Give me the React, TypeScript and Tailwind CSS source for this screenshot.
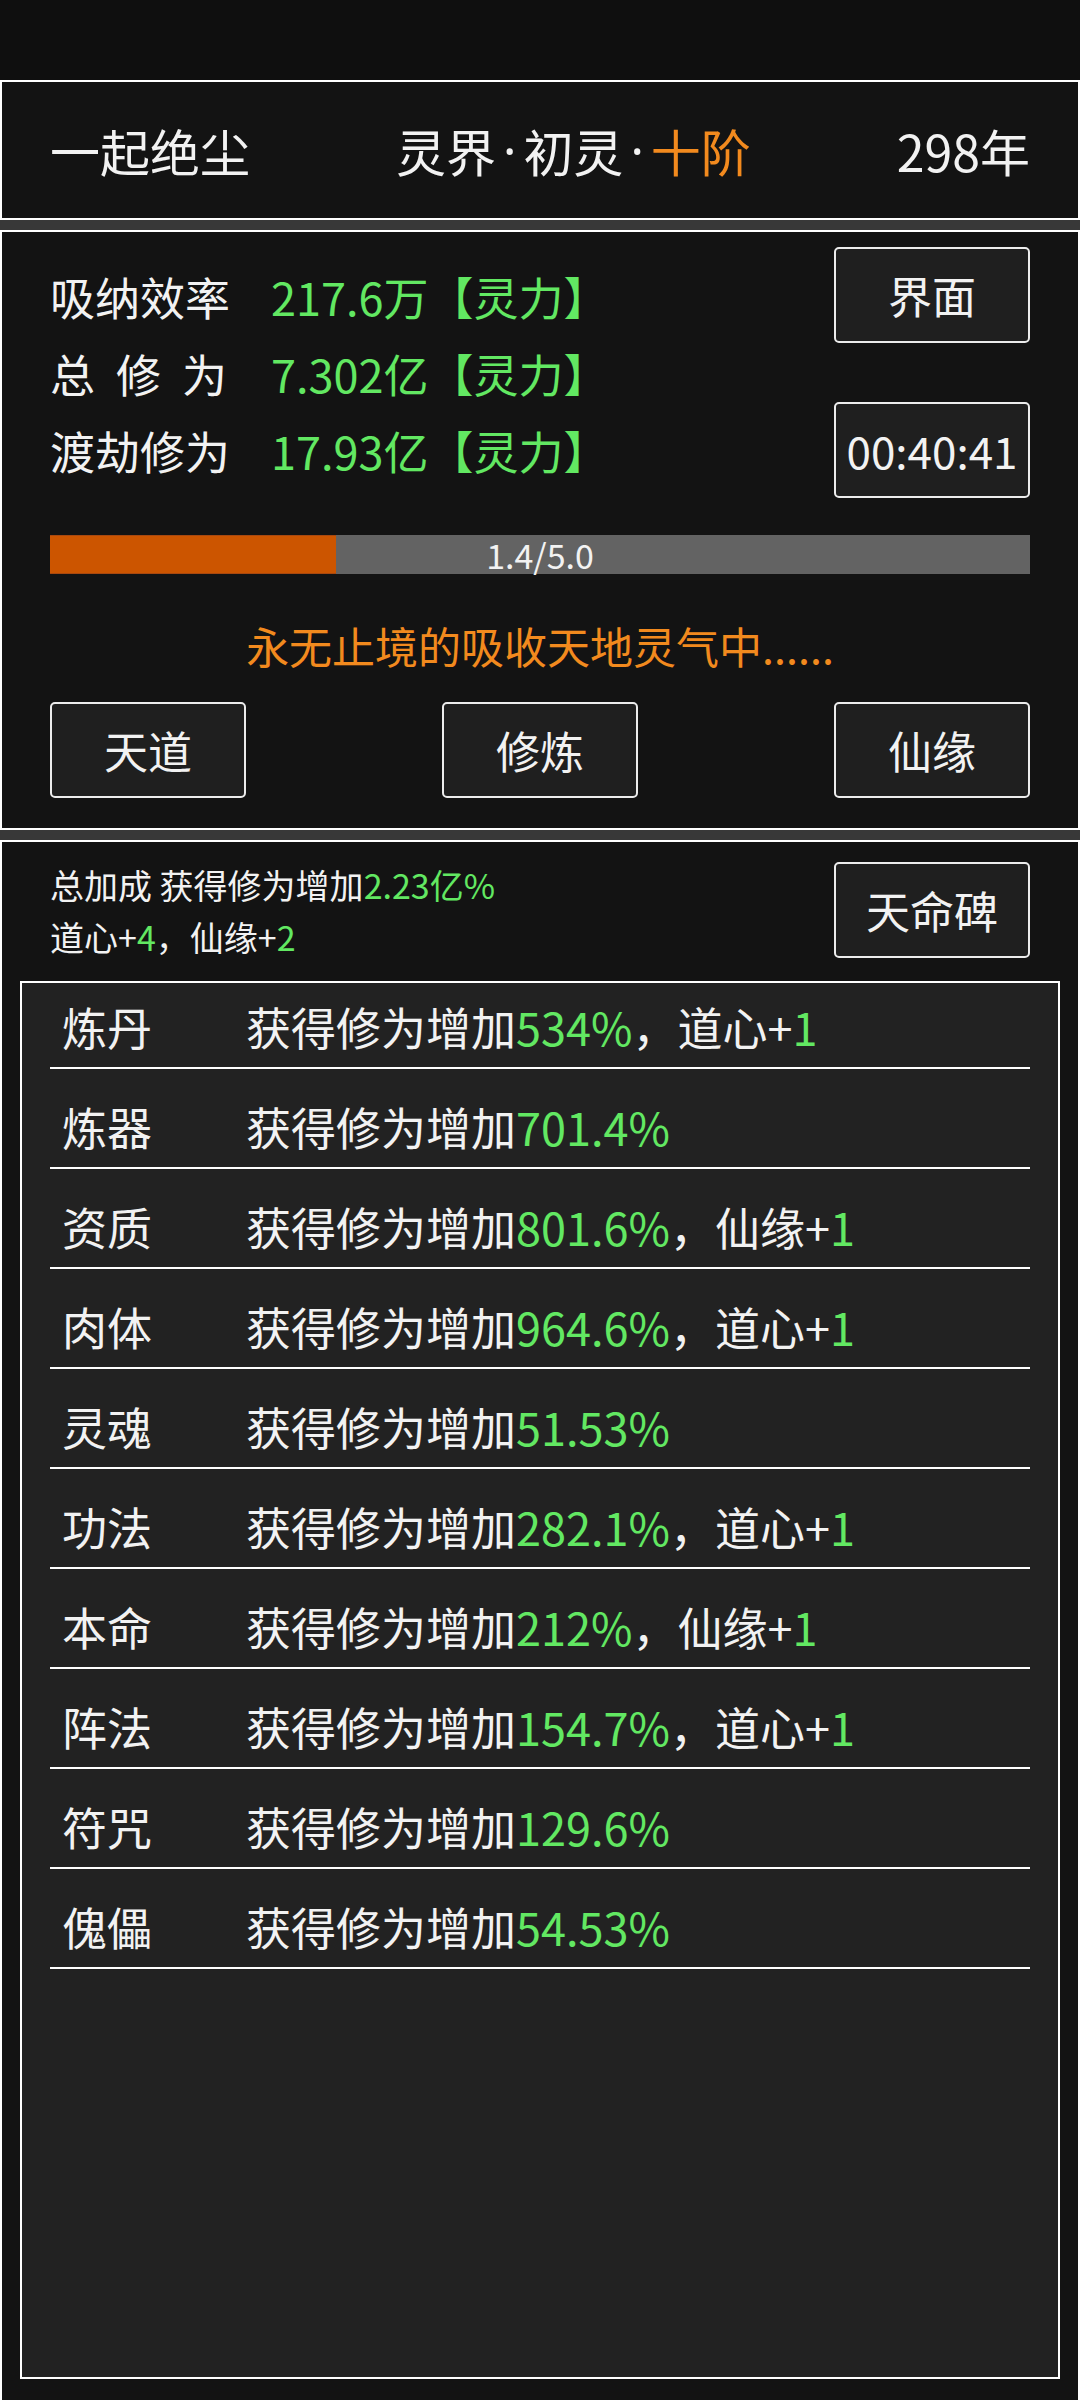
import React from 'react';

const green = 'text-[#62e862]';

const rows = [
  { name: '炼丹', pct: '534%', extra: '道心', n: '1' },
  { name: '炼器', pct: '701.4%' },
  { name: '资质', pct: '801.6%', extra: '仙缘', n: '1' },
  { name: '肉体', pct: '964.6%', extra: '道心', n: '1' },
  { name: '灵魂', pct: '51.53%' },
  { name: '功法', pct: '282.1%', extra: '道心', n: '1' },
  { name: '本命', pct: '212%', extra: '仙缘', n: '1' },
  { name: '阵法', pct: '154.7%', extra: '道心', n: '1' },
  { name: '符咒', pct: '129.6%' },
  { name: '傀儡', pct: '54.53%' },
];

const Btn: React.FC<{ children: React.ReactNode }> = ({ children }) => (
  <button className="w-[196px] h-[96px] border-2 border-[#ececec] rounded-[5px] bg-[#1f1f1f] text-[44px] text-[#f2f2f2] flex items-center justify-center leading-none">
    {children}
  </button>
);

const Spaced: React.FC<{ text: string }> = ({ text }) => (
  <span className="w-[177px] flex justify-between">
    {text.split('').map((c, i) => (
      <span key={i}>{c}</span>
    ))}
  </span>
);

// narrow latin middle dot, the CJK one is full width
const Dot = () => <span className="mx-[7px]" style={{ fontFamily: '"Noto Sans", sans-serif' }}>·</span>;

export default function App() {
  return (
    <div
      className="w-[1080px] min-h-[2400px] bg-[#131313] text-[#f2f2f2] overflow-hidden"
      style={{ fontFamily: '"Noto Sans CJK SC", "Noto Sans", sans-serif' }}
    >
      {/* status bar */}
      <div className="h-[80px] bg-[#0f0f0f]" />

      {/* header */}
      <div className="h-[140px] border-2 border-white bg-[#131313] flex items-center justify-between px-[48px] text-[50px] leading-none">
        <span>一起绝尘</span>
        <span className="flex items-center">
          灵界<Dot />初灵<Dot />
          <span className="text-[#f28a1e]">十阶</span>
        </span>
        <span>298年</span>
      </div>

      <div className="h-[10px] bg-[#383838]" />

      {/* cultivation panel */}
      <div className="h-[600px] border-2 border-white bg-[#131313] px-[48px]">
        <div className="flex justify-between">
          <div className="pt-[26px] text-[45px]">
            <div className="h-[77px] flex items-center">
              <Spaced text="吸纳效率" />
              <span className={`ml-[44px] ${green}`}>217.6万【灵力】</span>
            </div>
            <div className="h-[77px] flex items-center">
              <Spaced text="总修为" />
              <span className={`ml-[44px] ${green}`}>7.302亿【灵力】</span>
            </div>
            <div className="h-[77px] flex items-center">
              <Spaced text="渡劫修为" />
              <span className={`ml-[44px] ${green}`}>17.93亿【灵力】</span>
            </div>
          </div>
          <div className="pt-[15px] flex flex-col gap-[59px]">
            <Btn>界面</Btn>
            <Btn>00:40:41</Btn>
          </div>
        </div>

        <div className="mt-[37px] h-[39px] relative bg-[#636363] flex">
          <div className="w-[29.2%] h-full bg-[#cc5500] border-y border-[#a8480f]" />
          <span className="absolute inset-0 flex items-center justify-center text-[34px] leading-none text-[#f2f2f2]">
            1.4/5.0
          </span>
        </div>

        <div className="mt-[41px] leading-[60px] text-center text-[43px] text-[#f28a1e]">
          永无止境的吸收天地灵气中......
        </div>

        <div className="mt-[27px] flex justify-between">
          <Btn>天道</Btn>
          <Btn>修炼</Btn>
          <Btn>仙缘</Btn>
        </div>
      </div>

      <div className="h-[10px] bg-[#383838]" />

      {/* bonus panel */}
      <div className="h-[1570px] border-2 border-white bg-[#131313]">
        <div className="h-[116px] flex items-start justify-between px-[48px]">
          <div className="pt-[17px] text-[34px] leading-[52px]">
            <div>
              总加成 获得修为增加<span className={green}>2.23亿%</span>
            </div>
            <div>
              道心+<span className={green}>4</span>，仙缘+<span className={green}>2</span>
            </div>
          </div>
          <div className="pt-[20px]">
            <Btn>天命碑</Btn>
          </div>
        </div>

        <div className="mt-[23px] mx-[18px] h-[1398px] border-2 border-white bg-[#222222] px-[28px]">
          {rows.map((r, i) => (
            <div
              key={r.name}
              className={`${i === 0 ? 'h-[86px]' : 'h-[100px]'} flex items-end pb-[10px] border-b-2 border-white text-[45px] leading-[60px]`}
            >
              <span className="w-[196px] pl-[12px]">{r.name}</span>
              <span>
                获得修为增加<span className={green}>{r.pct}</span>
                {r.extra && (
                  <>
                    ，{r.extra}+<span className={green}>{r.n}</span>
                  </>
                )}
              </span>
            </div>
          ))}
        </div>
      </div>
    </div>
  );
}
